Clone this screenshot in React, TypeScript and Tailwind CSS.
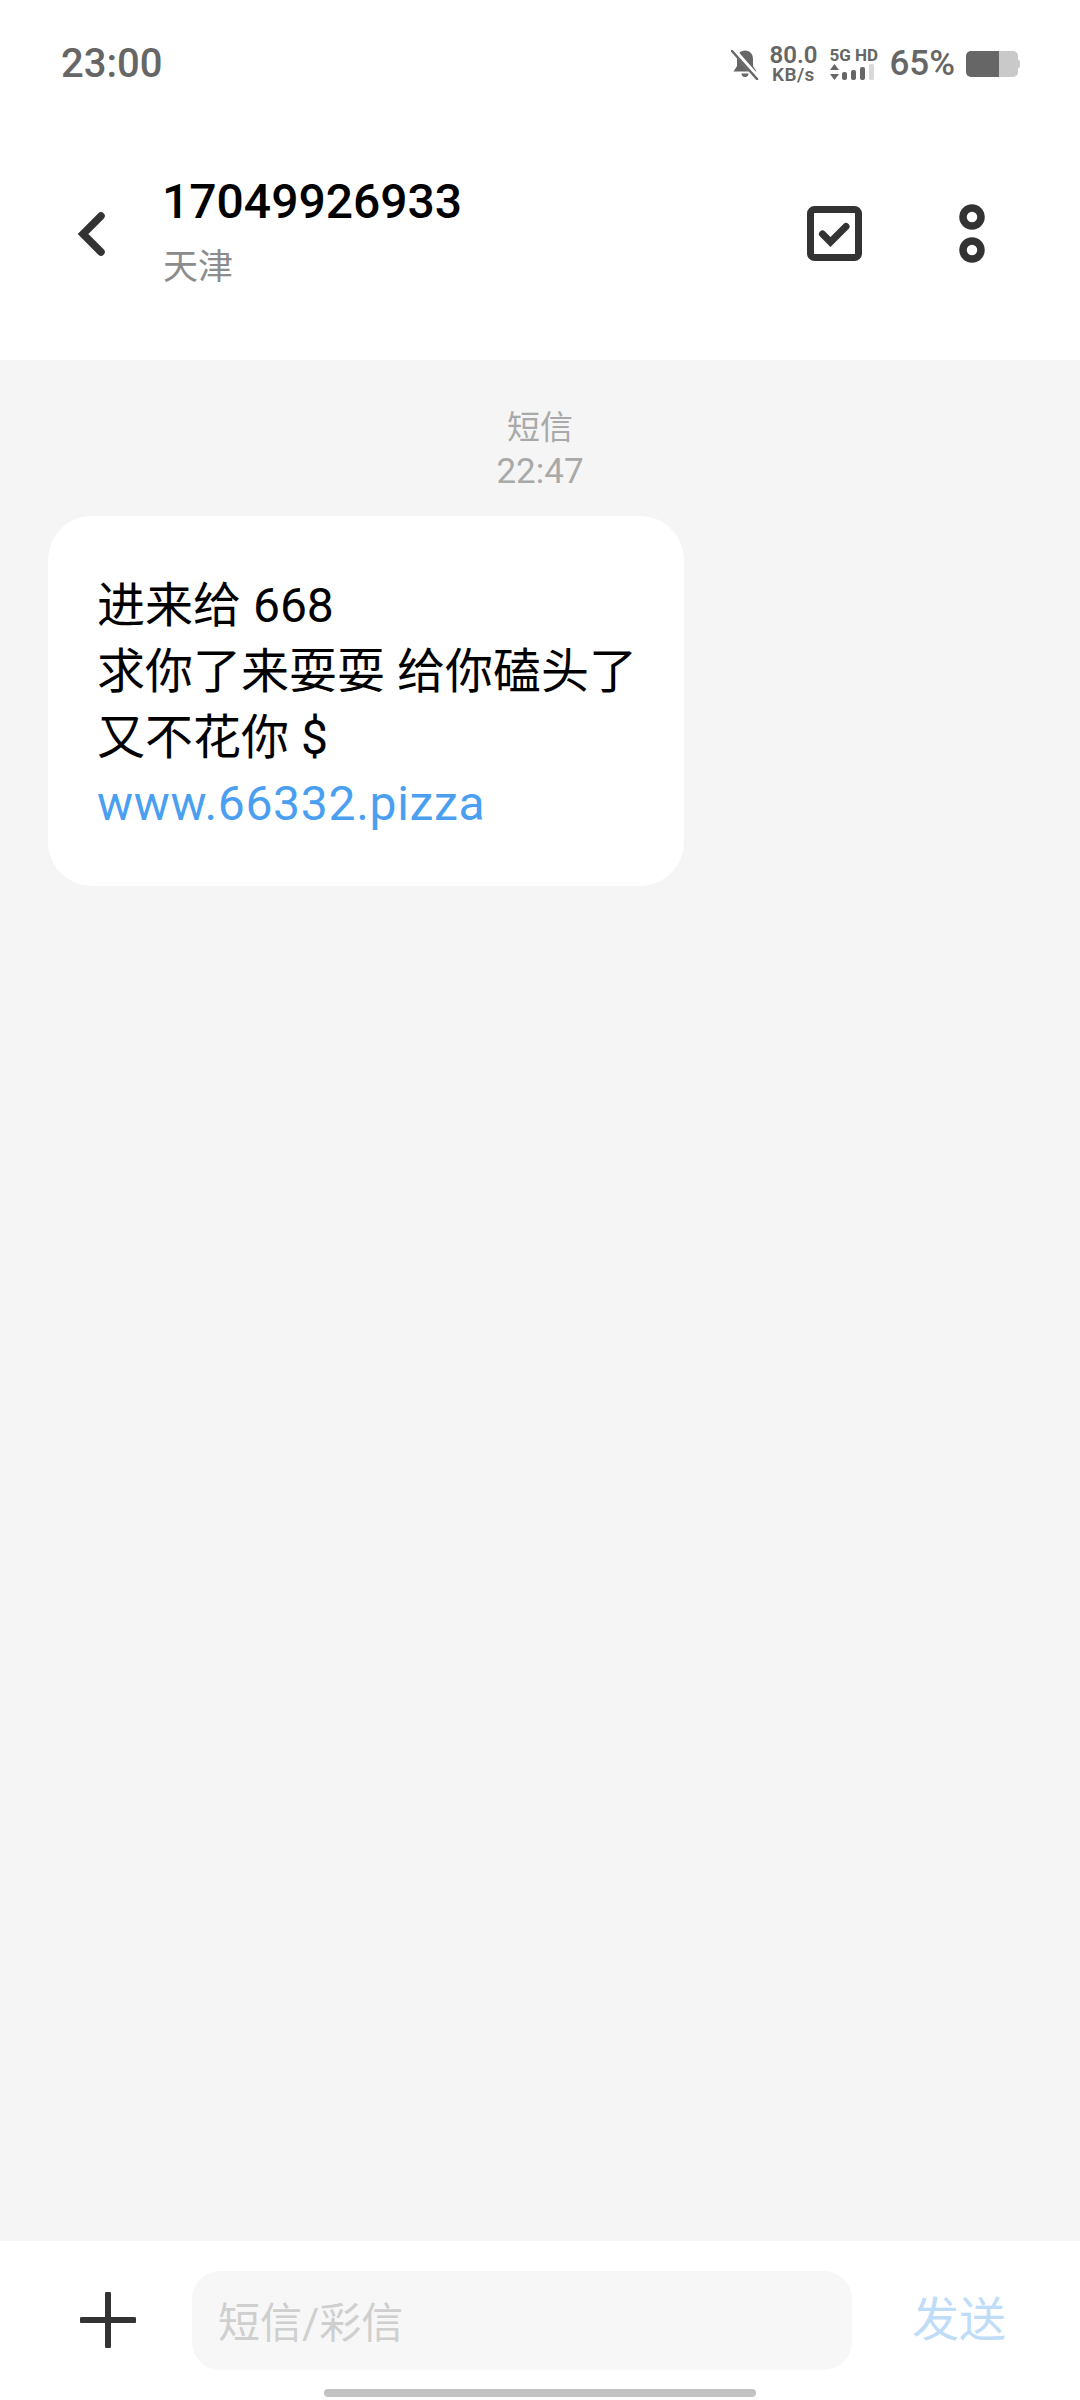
const cjk = 'Roboto, "Noto Sans CJK SC", sans-serif';

function Bell() {
  return (
    <svg width="28" height="32" viewBox="0 0 28 32" className="block">
      <path d="M14 2.500c-5 0-8 3.600-8 8.500v7l-3.500 5.500h23L22 18v-7c0-4.900-3-8.500-8-8.500z" fill="#666" />
      <path d="M10.500 25.500a3.500 3.500 0 0 0 7 0z" fill="#666" />
      <path d="M2 1.500 27 30" stroke="#fff" strokeWidth="5" />
      <path d="M1 3 26 31" stroke="#666" strokeWidth="2.500" strokeLinecap="round" />
    </svg>
  );
}

function Signal() {
  return (
    <svg width="50" height="17" viewBox="0 0 50 17" className="block">
      <path d="M5.500 0 10 6H1z M5.500 16 10 10H1z" fill="#666" />
      <rect x="13" y="8" width="5" height="8" rx="2" fill="#666" />
      <rect x="22" y="6" width="5" height="10" rx="2" fill="#666" />
      <rect x="31" y="3" width="5" height="13" rx="2" fill="#666" />
      <rect x="40" y="0" width="5" height="16" rx="1.500" fill="#d9d9d9" />
    </svg>
  );
}

function Battery() {
  return (
    <svg width="54" height="26" viewBox="0 0 54 26" className="block">
      <path d="M33 0h14a5 5 0 0 1 5 5v16a5 5 0 0 1-5 5H33z" fill="#c9c9c9" />
      <path d="M52 8.500a3 3 0 0 1 2 3v3a3 3 0 0 1-2 3z" fill="#c9c9c9" />
      <path d="M5 0h28v26H5a5 5 0 0 1-5-5V5a5 5 0 0 1 5-5z" fill="#666" />
    </svg>
  );
}

export default function App() {
  return (
    <div className="w-[1080px] h-[2400px] flex flex-col bg-white overflow-hidden" style={{ fontFamily: cjk }}>
      <header className="h-[360px] shrink-0 flex flex-col">
        <div className="h-[127px] flex pt-[44px] pl-[61px] pr-[60px] justify-between items-start">
          <span className="text-[40px] leading-[40px] font-medium text-[#666666]">23:00</span>
          <div className="flex items-center h-[36px] mt-[2px] text-[#666666]">
            <Bell />
            <div className="flex flex-col items-center ml-[10px] font-semibold w-[48px]">
              <span className="text-[24px] leading-[19px]">80.0</span>
              <span className="text-[19px] leading-[17px] tracking-[0.4px] mt-[1px]">KB/s</span>
            </div>
            <div className="flex flex-col items-start ml-[12px] font-bold w-[50px]">
              <span className="text-[17px] leading-[17px] whitespace-nowrap">5G HD</span>
              <Signal />
            </div>
            <span className="ml-[10px] text-[35px] leading-[36px] font-medium">65%</span>
            <div className="ml-[11px]"><Battery /></div>
          </div>
        </div>
        <div className="flex flex-1 items-start pl-[74px] pr-[94px]">
          <svg width="32" height="50" viewBox="0 0 32 50" className="mt-[82px] shrink-0">
            <path d="M27 7 9 25l18 18" fill="none" stroke="#333" strokeWidth="7.500" strokeLinecap="round" strokeLinejoin="miter" />
          </svg>
          <div className="ml-[57px] flex flex-col flex-1">
            <span className="text-[48px] leading-[52px] mt-[49px] -ml-[1px] font-medium text-black">17049926933</span>
            <span className="text-[35px] leading-[42px] mt-[19px] text-[#8c8c8c]">天津</span>
          </div>
          <svg width="55" height="56" viewBox="0 0 55 56" className="mt-[79px] shrink-0">
            <rect x="3.500" y="3.500" width="48" height="48" rx="4" fill="none" stroke="#333" strokeWidth="7" />
            <path d="M15.500 28l8 8 15.500-15.500" fill="none" stroke="#333" strokeWidth="7" strokeLinecap="round" strokeLinejoin="miter" />
          </svg>
          <svg width="28" height="60" viewBox="0 0 28 60" className="ml-[96px] mt-[77px] shrink-0">
            <circle cx="14" cy="13" r="9" fill="none" stroke="#333" strokeWidth="7.500" />
            <circle cx="14" cy="46" r="9" fill="none" stroke="#333" strokeWidth="7.500" />
          </svg>
        </div>
      </header>

      <main className="flex-1 bg-[#f5f5f5] flex flex-col">
        <div className="flex flex-col items-center pt-[46px] text-[#a9a9a9]">
          <span className="text-[33px] leading-[44px]">短信</span>
          <span className="text-[35px] leading-[44px]">22:47</span>
        </div>
        <div className="ml-[48px] mt-[22px] w-[636px] h-[370px] bg-white rounded-[44px] pl-[49px] pt-[57px] text-[48px] leading-[66px] text-black">
          <div>进来给 668</div>
          <div className="whitespace-nowrap">求你了来耍耍 给你磕头了</div>
          <div>又不花你 $</div>
          <div className="text-[#4a9ff0] tracking-[0.7px]">www.66332.pizza</div>
        </div>
      </main>

      <footer className="h-[159px] shrink-0 relative flex items-start">
        <svg width="56" height="56" viewBox="0 0 56 56" className="ml-[80px] mt-[51px] shrink-0">
          <path d="M28 2v52M2 28h52" stroke="#333" strokeWidth="6" strokeLinecap="round" />
        </svg>
        <div className="ml-[56px] mt-[30px] w-[660px] h-[99px] rounded-[28px] bg-[#f7f7f7] flex items-center pl-[26px] pt-[5px] text-[42px] text-[#cfcfcf]">
          短信/彩信
        </div>
        <span className="ml-[60px] mt-[51px] text-[47px] leading-[56px] text-[#bfdcf8]">发送</span>
        <div className="absolute left-[324px] bottom-[3px] w-[432px] h-[8px] rounded-full bg-[#c2c2c2]" />
      </footer>
    </div>
  );
}
